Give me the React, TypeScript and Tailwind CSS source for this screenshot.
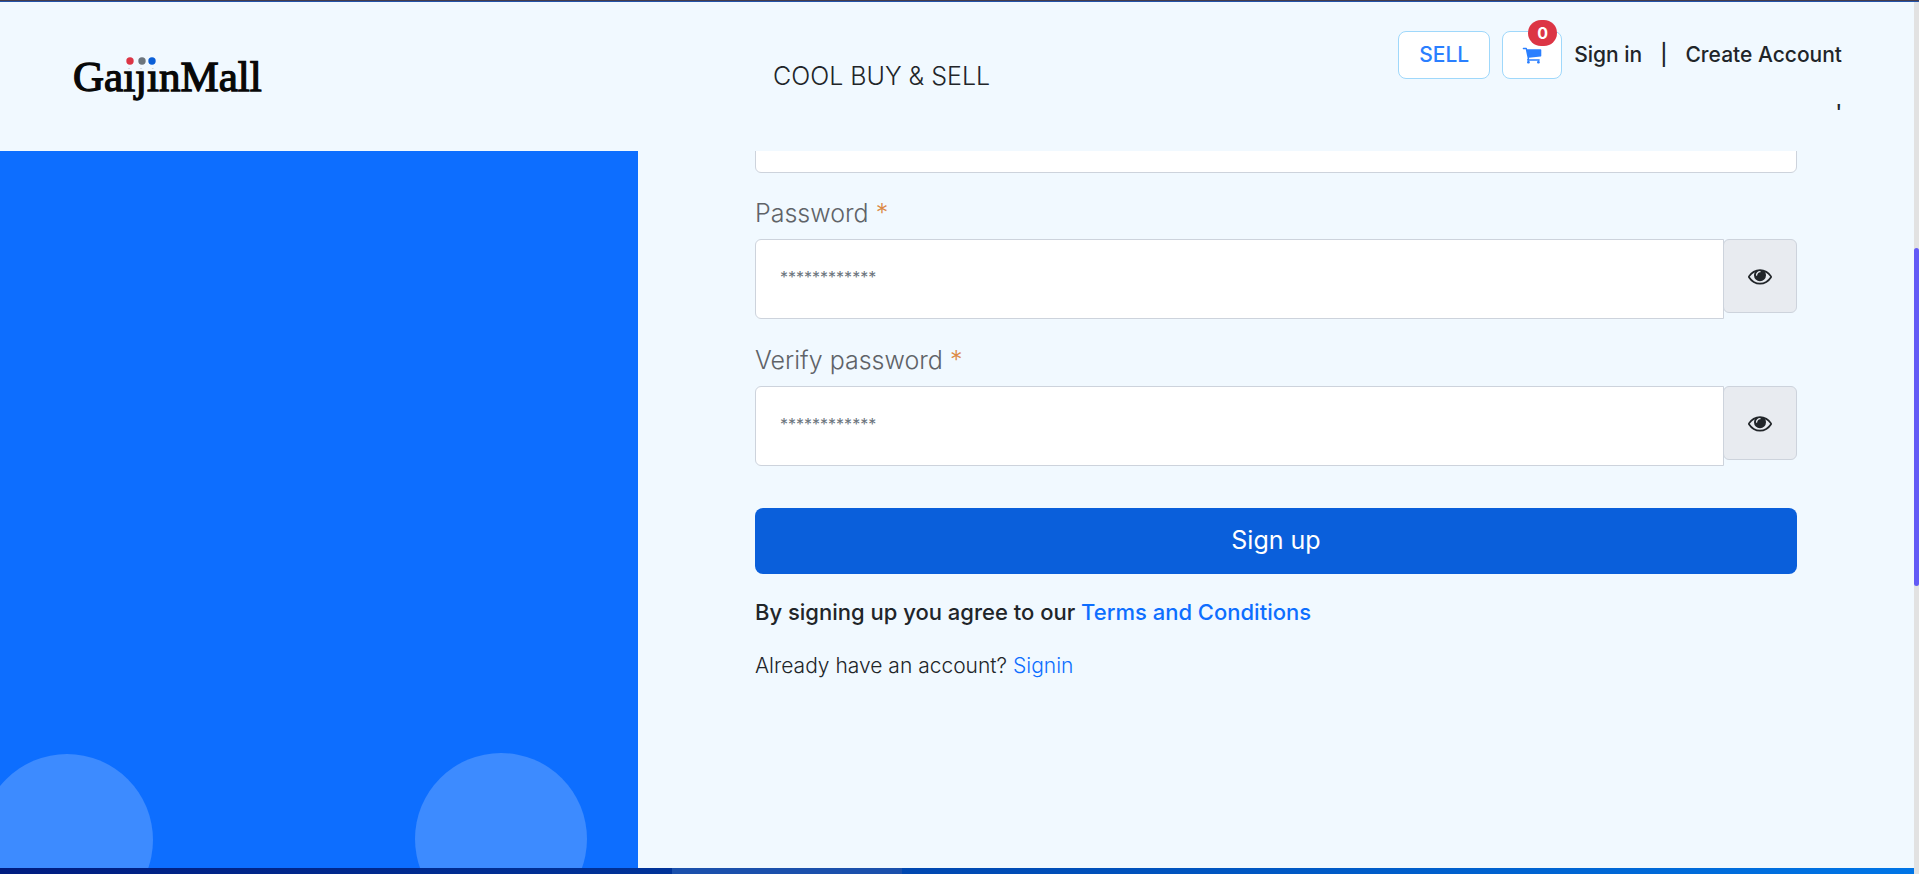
function Logo() {
  return (
    <svg width="196" height="56" viewBox="0 0 196 56" role="img" aria-label="GaijinMall">
      <text
        x="1"
        y="37"
        fontSize="43"
        fill="#080808"
        stroke="#080808"
        strokeWidth="1.3"
        fontFamily="'Liberation Serif', serif"
      >
        GaijinMall
      </text>
      <rect x="51" y="2" width="36" height="12" fill="#f1f9ff" />
      <circle cx="58" cy="7" r="3.7" fill="#dc3545" />
      <circle cx="70" cy="7" r="3.7" fill="#6c757d" />
      <circle cx="80" cy="7" r="3.7" fill="#0a5fd8" />
    </svg>
  );
}

function CartIcon() {
  return (
    <svg width="20" height="20" viewBox="0 0 1792 1792" fill="currentColor" aria-hidden="true">
      <path d="M704 1536q0 52-38 90t-90 38-90-38-38-90 38-90 90-38 90 38 38 90zm896 0q0 52-38 90t-90 38-90-38-38-90 38-90 90-38 90 38 38 90zm128-1088v512q0 24-16.500 42.500t-40.500 21.500l-1044 122q13 60 13 70 0 16-24 64h920q26 0 45 19t19 45-19 45-45 19h-1024q-26 0-45-19t-19-45q0-11 8-31.500t16-36 21.500-40 15.500-29.500l-177-823h-204q-26 0-45-19t-19-45 19-45 45-19h256q16 0 28.500 6.500t19.500 15.500 13 24.500 8 26 5.500 29.500 4.500 26h1201q26 0 45 19t19 45z" />
    </svg>
  );
}

function EyeIcon() {
  return (
    <svg width="24" height="24" viewBox="0 0 1792 1792" fill="currentColor" aria-hidden="true">
      <path d="M1664 960q-152-236-381-353 61 104 61 225 0 185-131.500 316.500t-316.500 131.500-316.500-131.500-131.500-316.500q0-121 61-225-229 117-381 353 133 205 333.500 326.500t434.500 121.500 434.500-121.500 333.500-326.500zm-720-384q0-20-14-34t-34-14q-125 0-214.500 89.500t-89.500 214.500q0 20 14 34t34 14 34-14 14-34q0-86 61-147t147-61q20 0 34-14t14-34zm848 384q0 34-20 69-140 230-376.500 368.500t-499.500 138.500-499.500-139-376.500-368q-20-35-20-69t20-69q140-229 376.500-368t499.500-139 499.500 139 376.500 368q20 35 20 69z" />
    </svg>
  );
}

function Header() {
  return (
    <header className="flex h-[149px] shrink-0 items-start justify-between px-[72px]">
      <a href="#" className="mt-[52px] block w-[701px]">
        <Logo />
      </a>
      <p className="mt-[56px] flex-1 text-[25px] leading-9 font-light">COOL BUY &amp; SELL</p>
      <div className="flex flex-col items-end">
        <nav className="mt-[29px] flex items-center text-[21px] font-medium">
          <a
            href="#"
            className="mr-3 flex h-12 items-center rounded-lg border border-[#9fd8fb] bg-white px-5 text-[#2a7fff]"
          >
            SELL
          </a>
          <a
            href="#"
            aria-label="Cart"
            className="relative mr-3 flex h-12 w-[60px] items-center justify-center rounded-lg border border-[#9fd8fb] bg-white text-[#2a7fff]"
          >
            <CartIcon />
            <span className="absolute -top-3 right-1 flex h-[26px] w-[29px] items-center justify-center rounded-full bg-[#dc3545] text-base font-bold text-white">
              0
            </span>
          </a>
          <a href="#">Sign in</a>
          <span className="mx-[18px]">|</span>
          <a href="#">Create Account</a>
        </nav>
        <span className="mt-5 text-[21px] leading-7 font-medium">'</span>
      </div>
    </header>
  );
}

function PasswordField({ id, label }: { id: string; label: string }) {
  return (
    <div className="mb-[23px]">
      <label htmlFor={id} className="mb-2 block text-[25px] leading-9 font-light text-[#5f6368]">
        {label} <span className="text-[#dc8a45]">*</span>
      </label>
      <div className="flex items-start">
        <input
          id={id}
          type="password"
          placeholder="************"
          className="h-20 min-w-0 flex-1 rounded-l-md border border-[#cdd3dc] bg-white px-6 pb-1 text-base placeholder:text-[#6c757d]"
        />
        <button
          type="button"
          aria-label="Show password"
          className="-ml-px flex h-[74px] w-[74px] items-center justify-center rounded-md border border-[#cdd3dc] bg-[#e8ebf0] text-[#212529]"
        >
          <EyeIcon />
        </button>
      </div>
    </div>
  );
}

export default function App() {
  return (
    <div className="flex min-h-screen flex-col bg-[#f1f9ff] font-['Inter',sans-serif] text-[#212529]">
      <div className="h-0.5 shrink-0 border-b border-[#2353a8] bg-[#453c4c]" />
      <div className="flex flex-1">
        <div className="flex min-w-0 flex-1 flex-col">
          <Header />
          <main className="flex flex-1">
            <aside className="relative w-1/3 overflow-hidden bg-[#0d6eff]">
              <div className="absolute -bottom-[58px] -left-[19px] size-[172px] rounded-full bg-[#3d8bff]" />
              <div className="absolute -bottom-[57px] left-[65%] size-[172px] rounded-full bg-[#3d8bff]" />
            </aside>
            <form className="w-2/3 overflow-hidden px-[117px]">
              <input
                type="text"
                aria-label="Email"
                className="-mt-[58px] mb-[22px] block h-20 w-full rounded-md border border-[#cdd3dc] bg-white px-6 text-base"
              />
              <PasswordField id="password" label="Password" />
              <PasswordField id="verify" label="Verify password" />
              <button
                type="submit"
                className="mt-[42px] block h-[66px] w-full rounded-lg bg-[#0a5fdb] text-[25px] text-white"
              >
                Sign up
              </button>
              <p className="mt-[22px] text-[22px] leading-8 font-medium">
                By signing up you agree to our{" "}
                <a href="#" className="text-[#0d6eff]">
                  Terms and Conditions
                </a>
              </p>
              <p className="mt-[22px] text-[21px] leading-8 font-light">
                Already have an account?{" "}
                <a href="#" className="text-[#0d6eff]">
                  Signin
                </a>
              </p>
            </form>
          </main>
        </div>
        <div className="w-[5px] bg-[#e2e2e2] pt-[246px]">
          <div className="h-[338px] rounded-sm bg-[#635bf6]" />
        </div>
      </div>
      <div className="flex h-1.5 shrink-0">
        <div className="w-[35%] bg-linear-to-r from-[#001c80] to-[#003399]" />
        <div className="w-[12%] bg-[#1b50ac]" />
        <div className="flex-1 bg-linear-to-r from-[#0047b0] to-[#0075e6]" />
        <div className="w-[5px] bg-[#e2e2e2]" />
      </div>
    </div>
  );
}
